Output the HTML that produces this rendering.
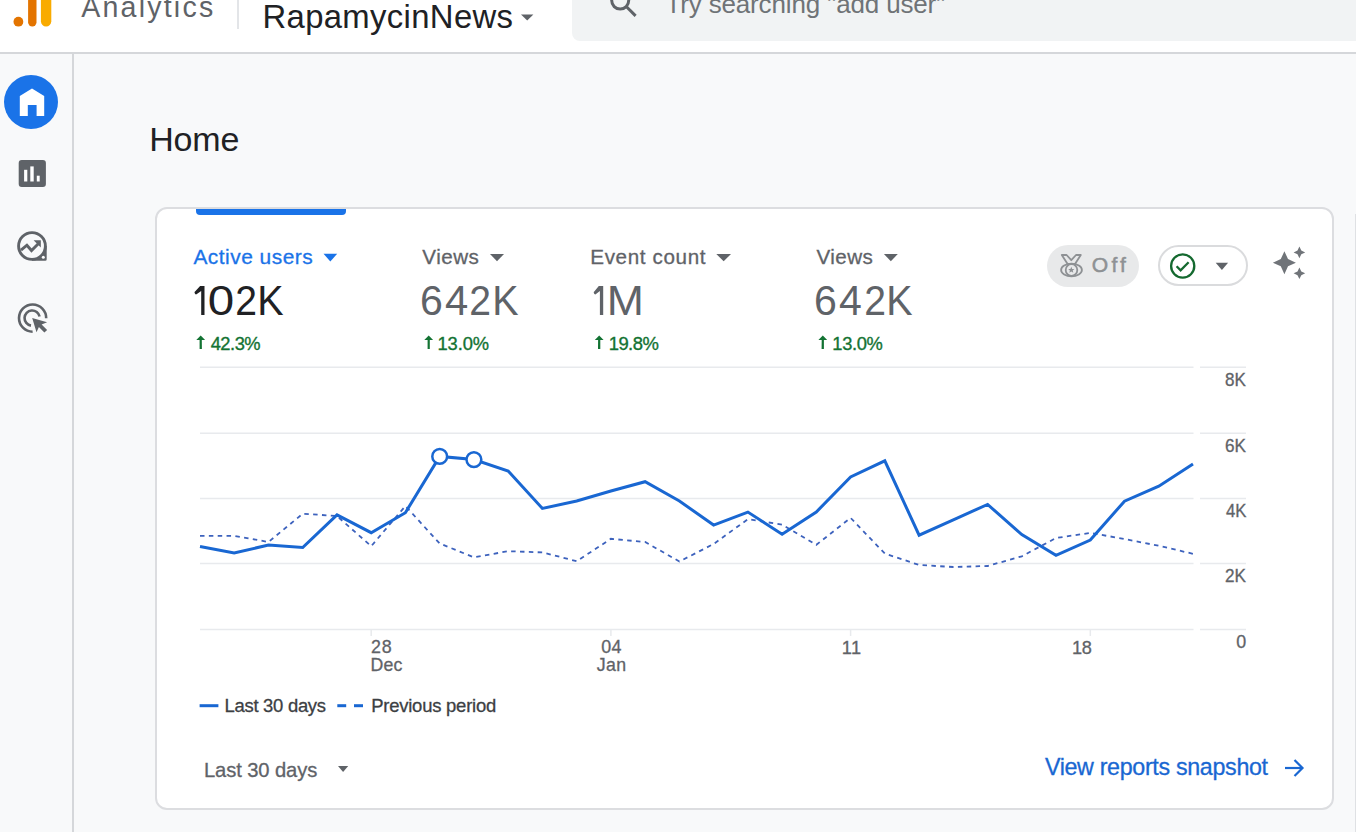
<!DOCTYPE html>
<html><head><meta charset="utf-8"><style>
html,body{margin:0;padding:0;}
body{width:1356px;height:832px;overflow:hidden;position:relative;background:#f8f9fa;font-family:"Liberation Sans",sans-serif;}
.t{position:absolute;white-space:pre;line-height:1;}
#hdr{position:absolute;left:0;top:0;width:1356px;height:52px;background:#fff;border-bottom:2px solid #d5d7da;}
#search{position:absolute;left:572px;top:-20px;width:800px;height:61px;background:#f1f3f4;border-radius:8px;}
#side{position:absolute;left:72px;top:54px;width:2px;height:779px;background:#d5d7da;}
#card{position:absolute;left:155px;top:207px;width:1175px;height:599px;background:#fff;border:2px solid #dcdde0;border-radius:12px;}
#tab{position:absolute;left:196px;top:208.5px;width:150px;height:6.5px;background:#1a73e8;border-radius:0 0 4px 4px;}
#pill1{position:absolute;left:1047px;top:245px;width:92px;height:42px;background:#e8e9ea;border-radius:21px;}
#pill2{position:absolute;left:1158px;top:245px;width:86px;height:37px;background:#fff;border:2px solid #dadbdd;border-radius:21px;}
#rline{position:absolute;left:1355px;top:214px;width:1px;height:620px;background:#dfe1e4;}
</style></head><body>
<div id="hdr"></div>
<div id="search"></div>
<div id="side"></div>
<div id="card"></div>
<div id="tab"></div>
<div id="pill1"></div>
<div id="pill2"></div>
<div id="rline"></div>
<svg width="1356" height="832" style="position:absolute;left:0;top:0">
<!-- logo -->
<circle cx="18.4" cy="21.7" r="4.9" fill="#e37400"/>
<rect x="28.1" y="-10" width="8.4" height="36.5" rx="4.2" fill="#e37400"/>
<rect x="40.9" y="-10" width="10.4" height="36.5" rx="5.2" fill="#f9ab00"/>
<line x1="238" y1="0" x2="238" y2="29" stroke="#dadce0" stroke-width="1.5"/>
<path d="M521 14.5 L533.4 14.5 L527.2 20.6 Z" fill="#5f6368"/>
<!-- search icon -->
<g fill="none" stroke="#5f6368" stroke-width="3">
<circle cx="620.2" cy="0.6" r="8.5"/>
<line x1="626.5" y1="6.8" x2="635.6" y2="15.9"/>
</g>
<!-- sidebar icons -->
<circle cx="31" cy="102" r="27" fill="#1a73e8"/>
<path d="M19.8 96 L32 88.5 L44.2 96 L44.2 116 L36.6 116 L36.6 105 L27.8 105 L27.8 116 L19.8 116 Z" fill="#fff"/>
<rect x="18.7" y="160.1" width="27.2" height="27" rx="3" fill="#5f6368"/>
<rect x="24.1" y="169.8" width="3.2" height="11.7" fill="#fff"/>
<rect x="30.3" y="166.4" width="3.4" height="15.1" fill="#fff"/>
<rect x="36.8" y="175.7" width="2.9" height="5.8" fill="#fff"/>
<circle cx="32" cy="246" r="13.4" fill="none" stroke="#5f6368" stroke-width="2.9"/>
<path d="M32 259.4 L32 260.85 L45.2 260.85 Q46.7 260.85 46.7 259.35 L46.7 246 L45.4 246 A13.4 13.4 0 0 1 32 259.4 Z" fill="#5f6368"/>
<polyline points="21,250.2 26.9,245.2 31.5,250.5 38.8,243.2" fill="none" stroke="#5f6368" stroke-width="2.9"/>
<path d="M33.6 240.2 L40.8 240.2 L40.8 247.4 Z" fill="#5f6368"/>
<circle cx="43.3" cy="257.2" r="1.5" fill="#fff"/>
<g fill="none" stroke="#5f6368" stroke-width="2.6">
<path d="M32.6 331.7 A13.6 13.6 0 1 1 46.2 318.3"/>
<path d="M31 325.6 A7.6 7.6 0 1 1 39.6 316.6"/>
</g>
<path d="M32.2 318 L47.1 322.3 L41.6 324.4 L47.1 329.9 L44.4 332.6 L38.9 327.1 L36.5 332.3 Z" fill="#5f6368"/>
<!-- metric triangles -->
<path d="M323.5 253.7 L337.2 253.7 L330.35 261.4 Z" fill="#1a73e8"/>
<path d="M490 254 L504 254 L497 261.3 Z" fill="#5f6368"/>
<path d="M716.3 254 L731 254 L723.65 261.3 Z" fill="#5f6368"/>
<path d="M883.9 254 L897.8 254 L890.85 261.3 Z" fill="#5f6368"/>
<!-- arrows up -->
<g fill="#137333">
<path d="M200.7 335.4 L205.1 339.9 L201.8 339.9 L201.9 348.9 L199.6 348.9 L199.6 339.9 L196.3 339.9 Z"/><path d="M428.7 335.4 L433.1 339.9 L429.8 339.9 L429.8 348.9 L427.6 348.9 L427.6 339.9 L424.3 339.9 Z"/><path d="M599.2 335.4 L603.6 339.9 L600.3 339.9 L600.3 348.9 L598.0 348.9 L598.1 339.9 L594.8 339.9 Z"/><path d="M822.8 335.4 L827.2 339.9 L823.9 339.9 L823.9 348.9 L821.6 348.9 L821.7 339.9 L818.4 339.9 Z"/>
</g>
<!-- off pill icon -->
<g fill="none" stroke="#8e9194" stroke-width="1.8" stroke-linejoin="round">
<polygon points="1061.8,255 1066.6,255 1071.3,260.2 1076,255 1080.8,255 1075,264 1067.6,264"/>
<ellipse cx="1071.5" cy="270" rx="10.4" ry="6.3"/>
<circle cx="1071.5" cy="270" r="5.8" fill="#e8e9ea"/>
</g>
<path d="M1071.3 266.8 L1072.2 269 L1074.4 269.1 L1072.7 270.5 L1073.3 272.7 L1071.3 271.4 L1069.3 272.7 L1069.9 270.5 L1068.2 269.1 L1070.4 269 Z" fill="#8e9194"/>
<!-- check pill -->
<circle cx="1182.7" cy="266" r="11.6" fill="none" stroke="#14692f" stroke-width="2.3"/>
<polyline points="1176.6,266.3 1180.6,270.3 1188.6,262.3" fill="none" stroke="#14692f" stroke-width="2.3"/>
<path d="M1215.7 262.7 L1228.1 262.7 L1221.9 269.9 Z" fill="#5f6368"/>
<!-- sparkle -->
<g fill="#707479">
<polygon points="1284.40,251.20 1288.00,259.10 1295.90,262.70 1288.00,266.30 1284.40,274.20 1280.80,266.30 1272.90,262.70 1280.80,259.10"/>
<polygon points="1299.40,246.60 1301.30,250.50 1305.20,252.40 1301.30,254.30 1299.40,258.20 1297.50,254.30 1293.60,252.40 1297.50,250.50"/>
<polygon points="1299.40,267.50 1301.30,271.40 1305.20,273.30 1301.30,275.20 1299.40,279.10 1297.50,275.20 1293.60,273.30 1297.50,271.40"/>
</g>
<!-- chart -->
<g stroke="#e8eaed" stroke-width="1.5"><line x1="200" y1="367.2" x2="1193.5" y2="367.2"/><line x1="1200" y1="367.2" x2="1246" y2="367.2"/><line x1="200" y1="433.3" x2="1193.5" y2="433.3"/><line x1="1200" y1="433.3" x2="1246" y2="433.3"/><line x1="200" y1="498.6" x2="1193.5" y2="498.6"/><line x1="1200" y1="498.6" x2="1246" y2="498.6"/><line x1="200" y1="563.5" x2="1193.5" y2="563.5"/><line x1="1200" y1="563.5" x2="1246" y2="563.5"/><line x1="200" y1="629.5" x2="1193.5" y2="629.5"/><line x1="1200" y1="629.5" x2="1246" y2="629.5"/> <line x1="371.2" y1="629.5" x2="371.2" y2="636"/><line x1="610.9" y1="629.5" x2="610.9" y2="636"/><line x1="850.6" y1="629.5" x2="850.6" y2="636"/><line x1="1090.3" y1="629.5" x2="1090.3" y2="636"/></g>
<polyline points="200.0,535.8 234.2,535.8 268.5,542.0 302.7,513.7 337.0,516.0 371.2,546.2 405.4,506.0 439.7,543.5 473.9,557.3 508.2,551.2 542.4,552.4 576.7,561.2 610.9,538.8 645.1,542.0 679.4,561.5 713.6,544.0 747.9,519.2 782.1,524.6 816.3,544.8 850.6,517.9 884.8,553.5 919.1,565.0 953.3,567.0 987.6,566.0 1021.8,556.3 1056.0,538.0 1090.3,532.9 1124.5,539.0 1158.8,545.8 1193.0,553.8" fill="none" stroke="#3d62bd" stroke-width="1.8" stroke-dasharray="4.5 4.35"/>
<polyline points="200.0,546.5 234.2,553.0 268.5,545.0 302.7,547.5 337.0,514.8 371.2,532.7 405.4,512.7 439.7,456.4 473.9,459.6 508.2,471.0 542.4,508.4 576.7,501.0 610.9,491.0 645.1,481.7 679.4,501.0 713.6,525.1 747.9,512.1 782.1,534.2 816.3,512.0 850.6,477.0 884.8,460.8 919.1,535.2 953.3,519.8 987.6,504.4 1021.8,534.6 1056.0,555.4 1090.3,540.0 1124.5,501.2 1158.8,486.2 1193.0,464.0" fill="none" stroke="#1967d2" stroke-width="3" stroke-linejoin="miter"/>
<circle cx="439.7" cy="456.4" r="7.4" fill="#fff" stroke="#1967d2" stroke-width="2.5"/>
<circle cx="473.9" cy="459.6" r="7.4" fill="#fff" stroke="#1967d2" stroke-width="2.5"/>
<path d="M204.50 286.1 L204.50 314.9 L201.20 314.9 L201.20 290.9 L196.50 294.3 Q194.90 294.9 194.50 292.6 Q194.60 291.6 195.30 291.2 L200.10 286.1 Z" fill="#202124"/><path d="M603.20 286.1 L603.20 314.9 L599.90 314.9 L599.90 290.9 L595.70 294.3 Q594.10 294.9 593.70 292.6 Q593.80 291.6 594.50 291.2 L598.80 286.1 Z" fill="#5f6368"/>
<!-- legend -->
<line x1="199.6" y1="705.7" x2="218.4" y2="705.7" stroke="#1967d2" stroke-width="3"/>
<line x1="337.3" y1="705.7" x2="346.2" y2="705.7" stroke="#1967d2" stroke-width="3"/>
<line x1="354" y1="705.7" x2="363" y2="705.7" stroke="#1967d2" stroke-width="3"/>
<path d="M338 766 L348.2 766 L343.1 772 Z" fill="#5f6368"/>
<!-- link arrow -->
<g fill="none" stroke="#1967d2" stroke-width="2.2">
<line x1="1285" y1="768" x2="1302" y2="768"/>
<polyline points="1294.5,760 1302.5,768 1294.5,776"/>
</g>
</svg>
<div class="t" style="left:81.20px;top:-6.99px;font-size:28.58px;letter-spacing:2.209px;color:#5f6368;">Analytics</div>
<div class="t" style="left:262.47px;top:0.68px;font-size:32.85px;letter-spacing:0.354px;color:#202124;">RapamycinNews</div>
<div class="t" style="left:665.48px;top:-8.60px;font-size:26.00px;letter-spacing:-0.154px;color:#6f7377;">Try searching "add user"</div>
<div class="t" style="left:149.18px;top:121.99px;font-size:34.01px;letter-spacing:-0.164px;color:#202124;">Home</div>
<div class="t" style="left:193.40px;top:246.83px;font-size:20.93px;letter-spacing:0.488px;color:#1a73e8;-webkit-text-stroke:0.30px #1a73e8;">Active users</div>
<div class="t" style="left:208.41px;top:280.35px;font-size:42.30px;letter-spacing:0.000px;color:#202124;transform:scaleX(1.1230);transform-origin:1.69px 0;">0</div>
<div class="t" style="left:234.79px;top:280.35px;font-size:42.30px;letter-spacing:0.000px;color:#202124;transform:scaleX(0.9249);transform-origin:2.11px 0;">2</div>
<div class="t" style="left:257.42px;top:280.35px;font-size:42.30px;letter-spacing:0.000px;color:#202124;transform:scaleX(0.9334);transform-origin:3.38px 0;">K</div>
<div class="t" style="left:419.79px;top:280.35px;font-size:42.30px;letter-spacing:0.000px;color:#5f6368;transform:scaleX(0.9711);transform-origin:2.11px 0;">6</div>
<div class="t" style="left:444.95px;top:280.35px;font-size:42.30px;letter-spacing:0.000px;color:#5f6368;transform:scaleX(0.9878);transform-origin:0.85px 0;">4</div>
<div class="t" style="left:468.89px;top:280.35px;font-size:42.30px;letter-spacing:0.000px;color:#5f6368;transform:scaleX(0.9249);transform-origin:2.11px 0;">2</div>
<div class="t" style="left:491.52px;top:280.35px;font-size:42.30px;letter-spacing:0.000px;color:#5f6368;transform:scaleX(0.9334);transform-origin:3.38px 0;">K</div>
<div class="t" style="left:606.72px;top:280.35px;font-size:42.30px;letter-spacing:0.000px;color:#5f6368;transform:scaleX(1.0551);transform-origin:3.38px 0;">M</div>
<div class="t" style="left:813.59px;top:280.35px;font-size:42.30px;letter-spacing:0.000px;color:#5f6368;transform:scaleX(0.9711);transform-origin:2.11px 0;">6</div>
<div class="t" style="left:839.15px;top:280.35px;font-size:42.30px;letter-spacing:0.000px;color:#5f6368;transform:scaleX(0.9691);transform-origin:0.85px 0;">4</div>
<div class="t" style="left:863.89px;top:280.35px;font-size:42.30px;letter-spacing:0.000px;color:#5f6368;transform:scaleX(0.9249);transform-origin:2.11px 0;">2</div>
<div class="t" style="left:885.72px;top:280.35px;font-size:42.30px;letter-spacing:0.000px;color:#5f6368;transform:scaleX(0.9334);transform-origin:3.38px 0;">K</div>
<div class="t" style="left:210.63px;top:334.94px;font-size:18.31px;letter-spacing:-0.478px;color:#137333;-webkit-text-stroke:0.35px #137333;">42.3%</div>
<div class="t" style="left:422.30px;top:246.88px;font-size:20.64px;letter-spacing:0.482px;color:#5f6368;-webkit-text-stroke:0.30px #5f6368;">Views</div>
<div class="t" style="left:437.53px;top:334.94px;font-size:18.31px;letter-spacing:-0.102px;color:#137333;-webkit-text-stroke:0.35px #137333;">13.0%</div>
<div class="t" style="left:590.25px;top:246.88px;font-size:20.64px;letter-spacing:0.628px;color:#5f6368;-webkit-text-stroke:0.30px #5f6368;">Event count</div>
<div class="t" style="left:608.72px;top:335.07px;font-size:18.46px;letter-spacing:-0.551px;color:#137333;-webkit-text-stroke:0.35px #137333;">19.8%</div>
<div class="t" style="left:816.50px;top:246.88px;font-size:20.64px;letter-spacing:0.407px;color:#5f6368;-webkit-text-stroke:0.30px #5f6368;">Views</div>
<div class="t" style="left:832.33px;top:334.94px;font-size:18.31px;letter-spacing:-0.377px;color:#137333;-webkit-text-stroke:0.35px #137333;">13.0%</div>
<div class="t" style="left:1091.85px;top:254.46px;font-size:21.08px;letter-spacing:3.164px;color:#8e9194;-webkit-text-stroke:0.5px #8e9194;">Off</div>
<div class="t" style="left:1225.30px;top:372.06px;font-size:17.88px;letter-spacing:0.000px;color:#5f6368;transform:scaleX(0.9554);transform-origin:0.80px 0;-webkit-text-stroke:0.30px #5f6368;">8K</div>
<div class="t" style="left:1225.21px;top:438.16px;font-size:17.88px;letter-spacing:0.000px;color:#5f6368;transform:scaleX(0.9596);transform-origin:0.89px 0;-webkit-text-stroke:0.30px #5f6368;">6K</div>
<div class="t" style="left:1225.74px;top:503.46px;font-size:17.88px;letter-spacing:0.000px;color:#5f6368;transform:scaleX(0.9354);transform-origin:0.36px 0;-webkit-text-stroke:0.30px #5f6368;">4K</div>
<div class="t" style="left:1225.21px;top:568.36px;font-size:17.88px;letter-spacing:0.000px;color:#5f6368;transform:scaleX(0.9596);transform-origin:0.89px 0;-webkit-text-stroke:0.30px #5f6368;">2K</div>
<div class="t" style="left:1236.28px;top:634.36px;font-size:17.88px;letter-spacing:0.000px;color:#5f6368;-webkit-text-stroke:0.30px #5f6368;">0</div>
<div class="t" style="left:371.11px;top:639.06px;font-size:17.88px;letter-spacing:0.764px;color:#5f6368;-webkit-text-stroke:0.30px #5f6368;">28</div>
<div class="t" style="left:370.58px;top:657.13px;font-size:17.73px;letter-spacing:0.149px;color:#5f6368;-webkit-text-stroke:0.30px #5f6368;">Dec</div>
<div class="t" style="left:601.28px;top:639.06px;font-size:17.88px;letter-spacing:0.407px;color:#5f6368;-webkit-text-stroke:0.30px #5f6368;">04</div>
<div class="t" style="left:596.73px;top:657.13px;font-size:17.73px;letter-spacing:0.434px;color:#5f6368;-webkit-text-stroke:0.30px #5f6368;">Jan</div>
<div class="t" style="left:841.84px;top:638.92px;font-size:18.17px;letter-spacing:0.475px;color:#5f6368;-webkit-text-stroke:0.30px #5f6368;">11</div>
<div class="t" style="left:1071.94px;top:638.92px;font-size:18.17px;letter-spacing:-0.378px;color:#5f6368;-webkit-text-stroke:0.30px #5f6368;">18</div>
<div class="t" style="left:224.52px;top:697.17px;font-size:18.46px;letter-spacing:-0.277px;color:#3c4043;-webkit-text-stroke:0.30px #3c4043;">Last 30 days</div>
<div class="t" style="left:371.22px;top:697.17px;font-size:18.46px;letter-spacing:-0.223px;color:#3c4043;-webkit-text-stroke:0.30px #3c4043;">Previous period</div>
<div class="t" style="left:203.88px;top:759.80px;font-size:20.20px;letter-spacing:-0.094px;color:#5f6368;-webkit-text-stroke:0.30px #5f6368;">Last 30 days</div>
<div class="t" style="left:1044.88px;top:756.37px;font-size:23.26px;letter-spacing:-0.321px;color:#1967d2;-webkit-text-stroke:0.30px #1967d2;">View reports snapshot</div>
</body></html>
